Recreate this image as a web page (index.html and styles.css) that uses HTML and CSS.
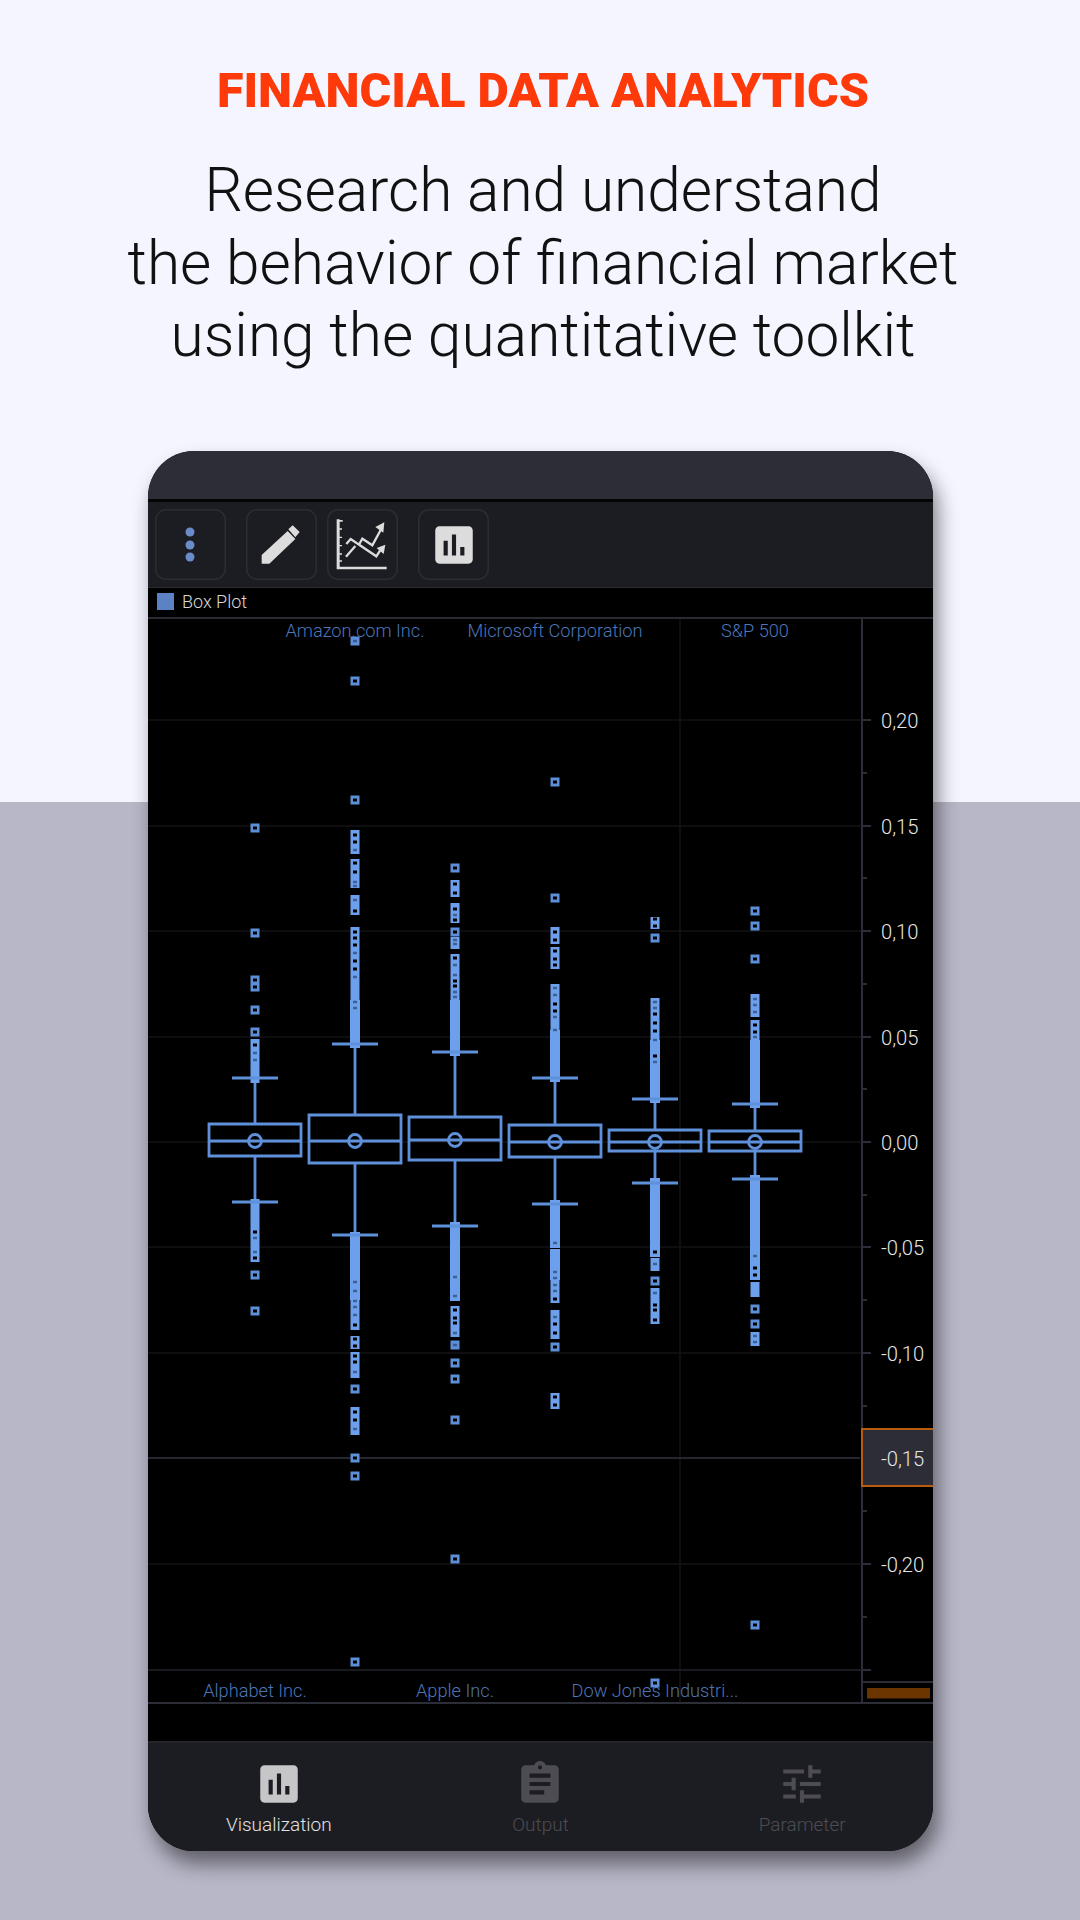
FILE: index.html
```html
<!DOCTYPE html>
<html lang="en">
<head>
<meta charset="utf-8">
<title>Financial Data Analytics</title>
<link rel="stylesheet" href="styles.css">
</head>
<body>
<header class="hero">
  <h1 class="hero-title">FINANCIAL DATA ANALYTICS</h1>
  <p class="hero-text">Research and understand<br>the behavior of financial market<br>using the quantitative toolkit</p>
</header>
<main class="phone">
  <div class="status"></div>
  <div class="toolbar">
    <button class="tool tool-menu">
      <svg viewBox="0 0 71 71"><circle cx="35" cy="23" r="4.5"/><circle cx="35" cy="36" r="4.5"/><circle cx="35" cy="48" r="4.5"/></svg>
    </button>
    <button class="tool tool-wide">
      <svg viewBox="20 14 213 213"><path d="M67 152 145 80l23 24-78 74H67zM147 75l13-12 21 20-13 16z"/></svg>
    </button>
    <button class="tool">
      <svg viewBox="262 14 213 213">
        <path d="M291 45h9v142h141v8H291zM300 47h9v5h-9zM300 72h7v4h-7zM300 97h7v4h-7zM300 122h7v4h-7zM300 147h7v4h-7zM300 168h7v4h-7z"/>
        <path class="icon-line" d="M320 119 333 104 410 156 423 136M319 157 347 125M359 119 368 103 398 123 423 77"/>
        <path d="M437 121 411 131 432 149zM434 54 407 68 431 85z"/>
      </svg>
    </button>
    <button class="tool tool-wide">
      <svg class="icon-m" viewBox="0 0 24 24"><path d="M19 3H5c-1.1 0-2 .9-2 2v14c0 1.1.9 2 2 2h14c1.1 0 2-.9 2-2V5c0-1.1-.9-2-2-2zM9 17H7v-7h2v7zm4 0h-2V7h2v10zm4 0h-2v-4h2v4z"/></svg>
    </button>
  </div>
  <div class="legend"><span class="legend-key"></span><span class="legend-name">Box Plot</span></div>
  <svg class="chart" viewBox="148 619 785 1085">
    <path class="grid" d="M148 720H862M148 826H862M148 931H862M148 1037H862M148 1142H862M148 1247H862M148 1353H862M148 1564H862M680 619V1703"/>
    <path class="grid-strong" d="M148 1670H862"/>
    <path class="cross" d="M148 1458H860"/>
    <path class="axis" d="M862 619V1703M862 720H871M862 826H871M862 931H871M862 1037H871M862 1142H871M862 1247H871M862 1353H871M862 1564H871M862 1670H871M862 773H867M862 878H867M862 984H867M862 1089H867M862 1195H867M862 1300H867M862 1406H867M862 1511H867M862 1617H867M862 1682H933"/>
    <path class="axis-base" d="M148 1703H933"/>
    <g class="series-label">
      <text x="355" y="637">Amazon.com Inc.</text>
      <text x="555" y="637">Microsoft Corporation</text>
      <text x="755" y="637">S&amp;P 500</text>
      <text x="255" y="1697">Alphabet Inc.</text>
      <text x="455" y="1697">Apple Inc.</text>
      <text x="655" y="1697">Dow Jones Industri...</text>
    </g>
    <g class="tick-label">
      <text x="881" y="728">0,20</text>
      <text x="881" y="834">0,15</text>
      <text x="881" y="939">0,10</text>
      <text x="881" y="1045">0,05</text>
      <text x="881" y="1150">0,00</text>
      <text x="881" y="1255">-0,05</text>
      <text x="881" y="1361">-0,10</text>
      <text x="881" y="1572">-0,20</text>
    </g>
    <rect class="cross-box" x="862" y="1429" width="75" height="57"/>
    <text class="cross-text" x="881" y="1466">-0,15</text>
    <rect class="scroll" x="867" y="1688" width="63" height="10.500"/>

    <g transform="translate(255 0)">
      <path class="out" d="M-4.500 828h9M-4.500 933h9M-4.500 980h9M-4.500 987h9M-4.500 1010h9M-4.500 1032h9M-4.500 1275h9M-4.500 1311h9"/>
      <path class="band" d="M-4.500 1039h9V1083h-9zM-4.500 1199h9V1262h-9z"/>
      <path class="box" d="M-46 1124H46V1156H-46ZM-46 1141H46M0 1124V1083M-23 1078H23M0 1156V1199M-23 1202H23"/>
      <circle class="mean" cy="1141" r="6.500"/>
      <path class="hole" d="M-2 828h4M-2 933h4M-2 980h4M-2 987h4M-2 1010h4M-2 1032h4M-2 1275h4M-2 1311h4M-2 1045h4M-2 1232h4M-2 1258h4"/>
      <path class="faint" d="M-2 1053h4M-2 1060h4M-2 1238h4M-2 1252h4"/>
    </g>

    <g transform="translate(355 0)">
      <path class="out" d="M-4.500 641h9M-4.500 681h9M-4.500 800h9M-4.500 1389h9M-4.500 1458h9M-4.500 1476h9M-4.500 1662h9"/>
      <path class="band" d="M-4.500 830h9V854h-9zM-4.500 859h9V888h-9zM-4.500 895h9V915h-9zM-4.500 927h9V1000h-9zM-5 1000h10V1048h-10zM-5 1232h10V1300h-10zM-4.500 1300h9V1330h-9zM-4.500 1336h9V1349h-9zM-4.500 1352h9V1378h-9zM-4.500 1407h9V1435h-9z"/>
      <path class="box" d="M-46 1115H46V1163H-46ZM-46 1141H46M0 1115V1048M-23 1044H23M0 1163V1232M-23 1235H23"/>
      <circle class="mean" cy="1141" r="6.500"/>
      <path class="hole" d="M-2 681h4M-2 800h4M-2 835h4M-2 842h4M-2 863h4M-2 872h4M-2 911h4M-2 932h4M-2 938h4M-2 945h4M-2 961h4M-2 969h4M-2 1325h4M-2 1339h4M-2 1346h4M-2 1356h4M-2 1362h4M-2 1389h4M-2 1412h4M-2 1420h4M-2 1458h4M-2 1476h4M-2 1662h4"/>
      <path class="faint" d="M-2 641h4M-2 850h4M-2 882h4M-2 886h4M-2 900h4M-2 953h4M-2 977h4M-2 1002h4M-2 1008h4M-2 1282h4M-2 1291h4M-2 1301h4M-2 1307h4M-2 1315h4M-2 1372h4M-2 1429h4"/>
    </g>

    <g transform="translate(455 0)">
      <path class="out" d="M-4.500 868h9M-4.500 932h9M-4.500 1345h9M-4.500 1363h9M-4.500 1379h9M-4.500 1420h9M-4.500 1559h9"/>
      <path class="band" d="M-4.500 880h9V897h-9zM-4.500 903h9V923h-9zM-4.500 937h9V949h-9zM-4.500 954h9V1000h-9zM-5 1000h10V1056h-10zM-5 1222h10V1301h-10zM-4.500 1306h9V1337h-9z"/>
      <path class="box" d="M-46 1117H46V1160H-46ZM-46 1140H46M0 1117V1056M-23 1052H23M0 1160V1222M-23 1226H23"/>
      <circle class="mean" cy="1140" r="6.500"/>
      <path class="hole" d="M-2 868h4M-2 884h4M-2 893h4M-2 909h4M-2 920h4M-2 932h4M-2 958h4M-2 981h4M-2 986h4M-2 1310h4M-2 1318h4M-2 1323h4M-2 1363h4M-2 1379h4M-2 1420h4M-2 1559h4"/>
      <path class="faint" d="M-2 915h4M-2 940h4M-2 944h4M-2 965h4M-2 975h4M-2 992h4M-2 997h4M-2 1277h4M-2 1296h4M-2 1333h4M-2 1345h4"/>
    </g>

    <g transform="translate(555 0)">
      <path class="out" d="M-4.500 782h9M-4.500 898h9M-4.500 1347h9"/>
      <path class="band" d="M-4.500 927h9V944h-9zM-4.500 947h9V969h-9zM-4.500 984h9V1030h-9zM-5 1030h10V1082h-10zM-5 1200h10V1248h-10zM-5 1249h10V1280h-10zM-4.500 1280h9V1303h-9zM-4.500 1310h9V1339h-9zM-4.500 1393h9V1409h-9z"/>
      <path class="box" d="M-46 1125H46V1157H-46ZM-46 1142H46M0 1125V1082M-23 1078H23M0 1157V1200M-23 1204H23"/>
      <circle class="mean" cy="1142" r="6.500"/>
      <path class="hole" d="M-2 782h4M-2 898h4M-2 932h4M-2 940h4M-2 951h4M-2 959h4M-2 965h4M-2 1004h4M-2 1011h4M-2 1299h4M-2 1324h4M-2 1333h4M-2 1347h4M-2 1397h4M-2 1405h4"/>
      <path class="faint" d="M-2 988h4M-2 995h4M-2 1017h4M-2 1030h4M-2 1243h4M-2 1272h4M-2 1278h4M-2 1285h4M-2 1291h4M-2 1317h4"/>
    </g>

    <g transform="translate(655 0)">
      <path class="out" d="M-4.500 938h9M-4.500 1281h9M-4.500 1683h9"/>
      <path class="band" d="M-4.500 917h9V929h-9zM-4.500 998h9V1040h-9zM-5 1040h10V1103h-10zM-5 1178h10V1257h-10zM-4.500 1258h9V1271h-9zM-4.500 1288h9V1324h-9z"/>
      <path class="box" d="M-46 1130H46V1151H-46ZM-46 1142H46M0 1130V1103M-23 1099H23M0 1151V1178M-23 1183H23"/>
      <circle class="mean" cy="1142" r="6.500"/>
      <path class="hole" d="M-2 919h4M-2 926h4M-2 938h4M-2 1014h4M-2 1023h4M-2 1031h4M-2 1056h4M-2 1252h4M-2 1281h4M-2 1305h4M-2 1310h4M-2 1320h4M-2 1683h4"/>
      <path class="faint" d="M-2 1002h4M-2 1008h4M-2 1040h4M-2 1062h4M-2 1264h4M-2 1293h4"/>
    </g>

    <g transform="translate(755 0)">
      <path class="out" d="M-4.500 911h9M-4.500 926h9M-4.500 959h9M-4.500 1309h9M-4.500 1324h9M-4.500 1625h9"/>
      <path class="band" d="M-4.500 994h9V1017h-9zM-4.500 1020h9V1040h-9zM-5 1040h10V1108h-10zM-5 1175h10V1280h-10zM-4.500 1282h9V1297h-9zM-4.500 1332h9V1346h-9z"/>
      <path class="box" d="M-46 1131H46V1151H-46ZM-46 1142H46M0 1131V1108M-23 1104H23M0 1151V1175M-23 1179H23"/>
      <circle class="mean" cy="1142" r="6.500"/>
      <path class="hole" d="M-2 911h4M-2 926h4M-2 959h4M-2 1025h4M-2 1032h4M-2 1268h4M-2 1275h4M-2 1309h4M-2 1324h4M-2 1625h4"/>
      <path class="faint" d="M-2 999h4M-2 1005h4M-2 1012h4M-2 1037h4M-2 1256h4M-2 1336h4M-2 1342h4"/>
    </g>
  </svg>
  <div class="blank"></div>
  <nav class="tabs">
    <div class="tab tab-active">
      <svg class="tab-icon" viewBox="0 0 24 24"><path d="M19 3H5c-1.1 0-2 .9-2 2v14c0 1.1.9 2 2 2h14c1.1 0 2-.9 2-2V5c0-1.1-.9-2-2-2zM9 17H7v-7h2v7zm4 0h-2V7h2v10zm4 0h-2v-4h2v4z"/></svg>
      <span>Visualization</span>
    </div>
    <div class="tab">
      <svg class="tab-icon" viewBox="0 0 24 24"><path d="M19 3h-4.180C14.400 1.840 13.300 1 12 1c-1.300 0-2.400.84-2.820 2H5c-1.100 0-2 .9-2 2v14c0 1.100.9 2 2 2h14c1.100 0 2-.9 2-2V5c0-1.100-.9-2-2-2zm-7 0c.55 0 1 .45 1 1s-.45 1-1 1-1-.45-1-1 .45-1 1-1zm2 14H7v-2h7v2zm3-4H7v-2h10v2zm0-4H7V7h10v2z"/></svg>
      <span>Output</span>
    </div>
    <div class="tab">
      <svg class="tab-icon" viewBox="0 0 24 24"><path d="M3 17v2h6v-2H3zM3 5v2h10V5H3zm10 16v-2h8v-2h-8v-2h-2v6h2zM7 9v2H3v2h4v2h2V9H7zm14 4v-2H11v2h10zm-6-4h2V7h4V5h-4V3h-2v6z"/></svg>
      <span>Parameter</span>
    </div>
  </nav>
</main>
</body>
</html>
```

FILE: styles.css
```css
* { box-sizing: border-box; }
html, body { margin: 0; padding: 0; }
body {
  width: 1080px;
  height: 1920px;
  overflow: hidden;
  font-family: Roboto, "Liberation Sans", sans-serif;
  background: linear-gradient(#f4f5ff 802px, #b8b7c8 802px);
}
.hero { height: 451px; padding: 61px 0 0 6px; text-align: center; }
.hero-title {
  margin: 0;
  font-size: 48.400px;
  line-height: 60px;
  font-weight: 900;
  color: #ff3a0a;
}
.hero-text {
  margin: 34px 0 0;
  font-size: 60.400px;
  line-height: 72.500px;
  font-weight: 300;
  color: #111;
}
.phone {
  width: 785px;
  height: 1400px;
  margin-left: 148px;
  border-radius: 46px;
  overflow: hidden;
  background: #000;
  box-shadow: 5px 13px 20px rgba(0, 0, 0, .48);
  display: flex;
  flex-direction: column;
}
.status { height: 48px; flex: none; background: #2d2d38; }
.toolbar {
  height: 89px;
  flex: none;
  padding: 7px 0 0 7px;
  display: flex;
  gap: 10px;
  background: #1c1d22;
  border-top: 3px solid #050506;
  border-bottom: 1px solid #2a2b30;
}
.tool {
  width: 71px;
  height: 71px;
  padding: 0;
  border: 0;
  border-radius: 11px;
  background: transparent;
  box-shadow: inset 0 0 0 1.500px #2c2d33;
  display: flex;
  align-items: center;
  justify-content: center;
  fill: #dcdcdc;
}
.tool svg { width: 71px; height: 71px; display: block; }
.tool .icon-m { width: 50px; height: 50px; }
.tool-wide { margin-left: 10px; }
.tool-menu { fill: #6a8cc8; }
.icon-line { fill: none; stroke: #dcdcdc; stroke-width: 7; }
.legend {
  height: 31px;
  flex: none;
  display: flex;
  align-items: center;
  gap: 8px;
  padding: 0 0 3px 9px;
  background: #000;
  border-bottom: 2px solid #2a2a33;
}
.legend-key { width: 17px; height: 17px; background: #5a82c4; }
.legend-name { font-size: 18px; font-weight: 300; color: #d8d8d8; }
.chart { width: 785px; height: 1085px; flex: none; display: block; }
.grid { stroke: #131317; stroke-width: 1.500; fill: none; }
.grid-strong { stroke: #191920; stroke-width: 2; }
.cross { stroke: #262630; stroke-width: 2; }
.axis { stroke: #2d2d38; stroke-width: 2; fill: none; }
.axis-base { stroke: #2d2d38; stroke-width: 2; }
.series-label text {
  font-size: 18.200px;
  font-weight: 300;
  fill: #4d76b8;
  text-anchor: middle;
}
.tick-label text, .cross-text {
  font-size: 20.200px;
  font-weight: 300;
  fill: #e6e6e6;
}
.cross-box { fill: #2d2d38; stroke: #b85c10; stroke-width: 2; }
.scroll { fill: #6b3500; }
.out { stroke: #5d8ed8; stroke-width: 9; fill: none; }
.band { fill: #6ca0ec; }
.box { stroke: #5f90da; stroke-width: 2.800; fill: none; }
.mean { stroke: #5f90da; stroke-width: 2.800; fill: none; }
.hole { stroke: #000; stroke-width: 3; fill: none; }
.faint { stroke: #2b4470; stroke-width: 2.500; fill: none; opacity: .7; }
.blank { height: 37px; flex: none; background: #000; }
.tabs {
  height: 110px;
  flex: none;
  display: grid;
  grid-template-columns: repeat(3, 1fr);
  background: #1c1d22;
  border-top: 2px solid #24252b;
}
.tab {
  display: flex;
  flex-direction: column;
  align-items: center;
  padding-top: 16px;
  fill: #4c4c52;
  color: #4c4c52;
  font-size: 19px;
  font-weight: 300;
}
.tab-active { fill: #c6c6c8; color: #e2e2e2; }
.tab-icon { width: 50px; height: 50px; display: block; }
.tab span { margin-top: 5px; line-height: 22px; }
```
